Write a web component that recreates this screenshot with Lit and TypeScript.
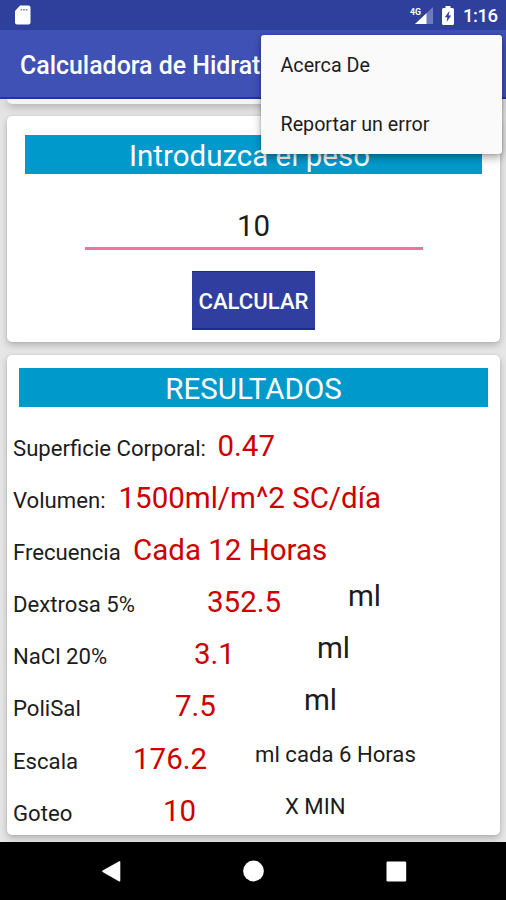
import { LitElement, html, css } from "lit";
import { customElement } from "lit/decorators.js";

interface ResultRow {
  label: string;
  value: string;
  unit?: string;
  smallUnit?: boolean;
  valueStart: number;
  unitStart?: number;
}

const RESULTS: ResultRow[] = [
  { label: "Superficie Corporal:", value: "0.47", valueStart: 204.5 },
  { label: "Volumen:", value: "1500ml/m^2 SC/día", valueStart: 105.5 },
  { label: "Frecuencia", value: "Cada 12 Horas", valueStart: 120 },
  { label: "Dextrosa 5%", value: "352.5", unit: "ml", valueStart: 194, unitStart: 335 },
  { label: "NaCl 20%", value: "3.1", unit: "ml", valueStart: 181, unitStart: 304 },
  { label: "PoliSal", value: "7.5", unit: "ml", valueStart: 162, unitStart: 291 },
  { label: "Escala", value: "176.2", unit: "ml cada 6 Horas", smallUnit: true, valueStart: 120, unitStart: 242 },
  { label: "Goteo", value: "10", unit: "X MIN", smallUnit: true, valueStart: 150, unitStart: 272 },
];

@customElement("app-root")
export class AppRoot extends LitElement {
  static styles = css`
    :host {
      display: flex;
      flex-direction: column;
      position: relative;
      width: 506px;
      height: 900px;
      overflow: hidden;
      background: #ececec;
      color: #1c1c1c;
      font-family: Roboto, "Liberation Sans", sans-serif;
      font-size: 22.15px;
    }
    * { box-sizing: border-box; }
    svg { display: block; }
    .status {
      flex: none;
      height: 30px;
      padding: 0 9px 0 14px;
      background: #2f3f9c;
      display: flex;
      align-items: center;
      color: #fff;
    }
    .status .sd { margin-right: auto; }
    .status .signal { margin-right: 8px; }
    .status .battery { margin-right: 9px; }
    .clock {
      width: 34px;
      font-size: 18.6px;
      font-weight: 500;
      letter-spacing: -0.5px;
      line-height: 30px;
      padding-top: 1px;
      white-space: nowrap;
    }
    .bar {
      flex: none;
      height: 69px;
      background: #3f51b5;
      border-bottom: 2px solid #1f35a0;
      padding: 0 20px;
      color: #fff;
      font-size: 24.9px;
      font-weight: 500;
      line-height: 71px;
      white-space: nowrap;
      overflow: hidden;
    }
    .content {
      flex: 1;
      min-height: 0;
      padding: 0 6px 0 7px;
      background: linear-gradient(#dedede, #e6e6e6 20px, #e6e6e6);
      overflow: hidden;
    }
    .card {
      background: #fff;
      border-radius: 5px;
      box-shadow: 0 3px 7px rgba(0, 0, 0, 0.24), 0 0 2px rgba(0, 0, 0, 0.08);
    }
    .previous {
      height: 5px;
      background: #f4f4f4;
      border-radius: 0 0 5px 5px;
    }
    .entry {
      margin-top: 12px;
      height: 226px;
      padding: 19px 18px 0;
      display: flex;
      flex-direction: column;
      align-items: center;
    }
    .results {
      margin-top: 13px;
      height: 480px;
      padding: 12.5px 12px 0 6px;
    }
    .band {
      align-self: stretch;
      height: 39px;
      background: #0099cc;
      color: #fff;
      font-size: 29.5px;
      line-height: 42px;
      text-align: center;
    }
    .entry .band { padding-right: 8px; }
    .results .band { margin: 0 0 15.5px 6px; }
    .weight {
      width: 338px;
      height: 75.5px;
      border-bottom: 3px solid #f2719a;
      padding-top: 35px;
      font-size: 29.5px;
      line-height: 35px;
      text-align: center;
    }
    .calc {
      margin-top: 21px;
      width: 123px;
      height: 59px;
      border: 0;
      border-top: 1px solid #1b2b94;
      border-bottom: 2px solid #1b2b94;
      padding: 0;
      background: #303f9f;
      color: #fff;
      font-family: inherit;
      font-size: 22.15px;
      font-weight: 500;
      white-space: nowrap;
      line-height: 58px;
    }
    .row {
      display: grid;
      height: 52.1px;
      align-items: baseline;
      white-space: nowrap;
    }
    .value {
      padding-top: 7px;
      color: #cc0000;
      font-size: 29.5px;
      line-height: 35px;
    }
    .unit {
      align-self: start;
      font-size: 29.5px;
      line-height: 36px;
    }
    .unit.small {
      font-size: 22.15px;
      line-height: 39px;
    }
    .nav {
      flex: none;
      height: 58px;
      background: #000;
    }
    .menu {
      position: absolute;
      left: 260.5px;
      top: 34.5px;
      width: 241px;
      height: 119px;
      border-radius: 3px;
      background: #fafafa;
      box-shadow: 0 4px 9px rgba(0, 0, 0, 0.32), 0 0 3px rgba(0, 0, 0, 0.2);
      font-size: 19.7px;
    }
    .item {
      height: 59.2px;
      padding-left: 20px;
      line-height: 62px;
    }
  `;

  render() {
    return html`
      <div class="status">
        <svg class="sd" width="18" height="21" viewBox="0 0 18 21">
          <path d="M6 0.5H14.5Q16.5 0.5 16.5 2.5V17.5Q16.5 19.5 14.5 19.5H3Q1 19.5 1 17.5V6Z" fill="#fff" />
          <path d="M6.6 4h1.6v1.6H6.6zM9.2 4h1.6v1.6H9.2zM11.8 4h1.6v1.6h-1.6z" fill="#6f7bbd" />
        </svg>
        <svg class="signal" width="24" height="20" viewBox="0 0 24 20">
          <path d="M23 2V19H5Z" fill="#6f7abd" />
          <path d="M16.5 8.2V19H5Z" fill="#fff" />
          <text x="0" y="9.5" font-family="Roboto, sans-serif" font-size="9.5" font-weight="700" fill="#fff"
            textLength="11" lengthAdjust="spacingAndGlyphs"
            stroke="#2f3f9c" stroke-width="1.5" paint-order="stroke">4G</text>
        </svg>
        <svg class="battery" width="12" height="19" viewBox="0 0 12 19">
          <path d="M3.5 0h5v2H10.5Q12 2 12 3.5V17.5Q12 19 10.5 19H1.5Q0 19 0 17.5V3.5Q0 2 1.5 2H3.5Z" fill="#fff" />
          <path d="M7.6 4.8L2.8 11.3H5.4L4.6 16L9.2 9.6H6.6Z" fill="#2f3f9c" />
        </svg>
        <span class="clock">1:16</span>
      </div>
      <div class="bar">Calculadora de Hidrat</div>
      <div class="content">
        <div class="card previous"></div>
        <section class="card entry">
          <div class="band">Introduzca el peso</div>
          <div class="weight">10</div>
          <button class="calc">CALCULAR</button>
        </section>
        <section class="card results">
          <div class="band">RESULTADOS</div>
          ${RESULTS.map((r) => this.renderRow(r))}
        </section>
      </div>
      <div class="nav">
        <svg width="506" height="58" viewBox="0 0 506 58" fill="#fff">
          <path d="M119.2 19.2Q120.3 18.7 120.3 20V38.5Q120.3 40 119.2 39.4L102.6 30Q101.7 29.3 102.6 28.6Z" />
          <circle cx="253.5" cy="29" r="10.4" />
          <rect x="386.5" y="19.5" width="19.7" height="20" rx="1.2" />
        </svg>
      </div>
      <div class="menu">
        <div class="item">Acerca De</div>
        <div class="item">Reportar un error</div>
      </div>
    `;
  }

  private renderRow(r: ResultRow) {
    const columns = r.unitStart
      ? `${r.valueStart}px ${r.unitStart - r.valueStart}px auto`
      : `${r.valueStart}px auto`;
    return html`
      <div class="row" style="grid-template-columns: ${columns}">
        <span class="label">${r.label}</span>
        <span class="value">${r.value}</span>
        ${r.unit ? html`<span class="unit ${r.smallUnit ? "small" : ""}">${r.unit}</span>` : null}
      </div>
    `;
  }
}
